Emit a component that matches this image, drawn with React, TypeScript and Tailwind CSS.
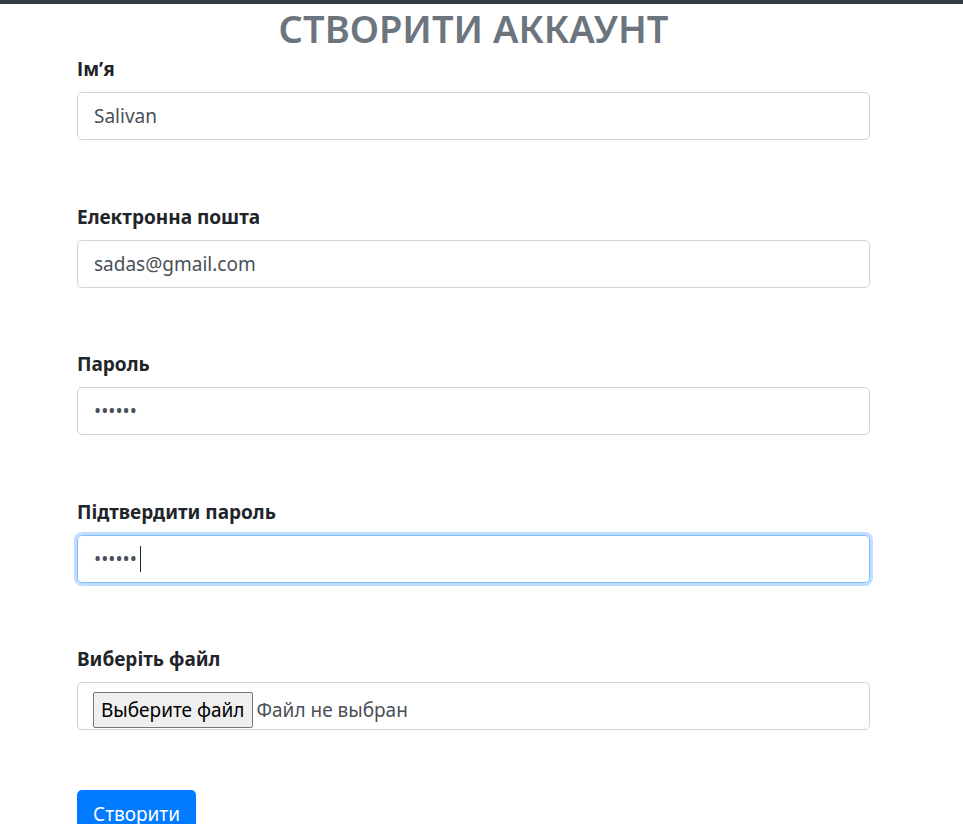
import React from "react";

const fields = [
  { label: "Ім’я", type: "text", value: "Salivan" },
  { label: "Електронна пошта", type: "email", value: "sadas@gmail.com" },
  { label: "Пароль", type: "password", value: "123456" },
];

function App() {
  return (
    <div className="min-h-[824px] bg-white font-['Noto_Sans',sans-serif] text-[#212529]">
      <div className="h-1 w-full bg-[#343a40]" />
      <div className="w-[793px] ml-[77px]">
        <h1 className="text-center text-[38px] leading-[48px] font-semibold text-[#6c757d]">
          СТВОРИТИ АККАУНТ
        </h1>

        <form className="flex flex-col mt-[2px]" onSubmit={(e) => e.preventDefault()}>
          {fields.map((f) => (
            <div key={f.label} className="mb-[61.5px]">
              <label className="block text-[19px] leading-[30px] font-bold mb-2">{f.label}</label>
              <input
                type={f.type}
                readOnly
                defaultValue={f.value}
                className="w-full h-12 px-4 text-[19px] text-[#495057] border border-[#ced4da] rounded-[5px] outline-none"
              />
            </div>
          ))}

          <div className="mb-[61.5px]">
            <label className="block text-[19px] leading-[30px] font-bold mb-2">Підтвердити пароль</label>
            <div className="relative">
              <input
                type="password"
                readOnly
                defaultValue="123456"
                className="w-full h-12 px-4 text-[19px] text-[#495057] border border-[#80bdff] rounded-[5px] outline-none shadow-[0_0_0_3px_rgba(0,123,255,0.25)]"
              />
              <span className="absolute left-[63px] top-[11px] h-[26px] w-px bg-[#212529]" />
            </div>
          </div>

          <div className="mb-[60px]">
            <label className="block text-[19px] leading-[30px] font-bold mb-2">Виберіть файл</label>
            <div className="w-full h-12 flex items-center pl-[15px] border border-[#ced4da] rounded-[5px]">
              <button
                type="button"
                className="h-9 px-[7px] mt-[8px] bg-[#efefef] border border-[#767676] rounded-[2px] text-[19px] text-black"
              >
                Выберите файл
              </button>
              <span className="ml-[4px] mt-[8px] text-[19px] text-[#495057]">Файл не выбран</span>
            </div>
          </div>

          <div>
            <button
              type="submit"
              className="h-12 px-4 bg-[#007bff] text-white text-[19px] rounded-[5px]"
            >
              Створити
            </button>
          </div>
        </form>
      </div>
    </div>
  );
}

export default App;
